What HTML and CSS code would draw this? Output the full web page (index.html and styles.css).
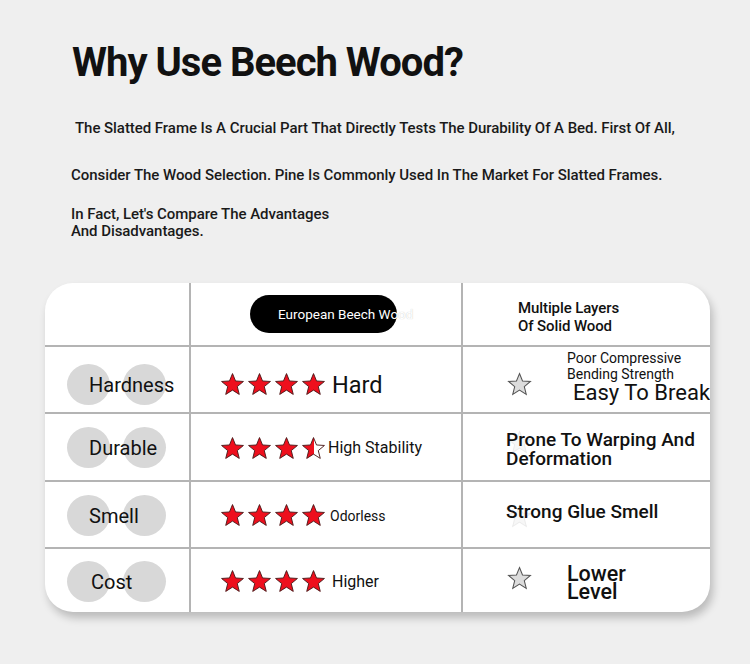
FILE: index.html
```html
<!DOCTYPE html>
<html>
<head>
<meta charset="utf-8">
<link rel="stylesheet" href="styles.css">
</head>
<body>
<svg width="0" height="0" class="defs">
  <defs>
    <symbol id="star" viewBox="0 0 24 24">
      <polygon points="12,1.5 14.9,8.6 22.5,9.1 16.6,14 18.5,21.5 12,17.4 5.5,21.5 7.4,14 1.5,9.1 9.1,8.6" />
    </symbol>
    <linearGradient id="half" x1="0" x2="1" y1="0" y2="0">
      <stop offset="0.5" stop-color="#ee0f1d"/>
      <stop offset="0.5" stop-color="#ffffff"/>
    </linearGradient>
  </defs>
</svg>
<div class="page">
  <h1 class="title">Why Use Beech Wood?</h1>
  <p class="p1">The Slatted Frame Is A Crucial Part That Directly Tests The Durability Of A Bed. First Of All,</p>
  <p class="p2">Consider The Wood Selection. Pine Is Commonly Used In The Market For Slatted Frames.</p>
  <p class="p3">In Fact, Let's Compare The Advantages<br>And Disadvantages.</p>

  <div class="card">
    <div class="cell head c1"></div>
    <div class="cell head c2"><span class="pill"><span class="pill-text">European Beech Wood</span></span></div>
    <div class="cell head c3"><div class="multi">Multiple Layers<br>Of Solid Wood</div></div>

    <div class="cell row1 c1"><div class="label"><span class="dot"></span><span class="dot"></span><span class="ltext">Hardness</span></div></div>
    <div class="cell row1 c2"><div class="stars"><svg class="s red"><use href="#star"/></svg><svg class="s red"><use href="#star"/></svg><svg class="s red"><use href="#star"/></svg><svg class="s red"><use href="#star"/></svg></div><span class="t-hard">Hard</span></div>
    <div class="cell c3 r1c3"><svg class="s gray"><use href="#star"/></svg><div class="r1txt"><div class="poor">Poor Compressive<br>Bending Strength</div><div class="break">Easy To Break</div></div></div>

    <div class="cell row c1"><div class="label"><span class="dot"></span><span class="dot"></span><span class="ltext">Durable</span></div></div>
    <div class="cell row c2"><div class="stars"><svg class="s red"><use href="#star"/></svg><svg class="s red"><use href="#star"/></svg><svg class="s red"><use href="#star"/></svg><svg class="s halfs"><use href="#star"/></svg></div><span class="t-stab">High Stability</span></div>
    <div class="cell row c3 txt3 prone"><svg class="s ghost"><use href="#star"/></svg><div class="warp">Prone To Warping And<br>Deformation</div></div>

    <div class="cell row c1"><div class="label"><span class="dot"></span><span class="dot"></span><span class="ltext">Smell</span></div></div>
    <div class="cell row c2"><div class="stars"><svg class="s red"><use href="#star"/></svg><svg class="s red"><use href="#star"/></svg><svg class="s red"><use href="#star"/></svg><svg class="s red"><use href="#star"/></svg></div><span class="t-odor">Odorless</span></div>
    <div class="cell row c3 txt3 glue"><svg class="s ghost"><use href="#star"/></svg><div class="warp">Strong Glue Smell</div></div>

    <div class="cell row c1 last"><div class="label"><span class="dot"></span><span class="dot"></span><span class="ltext cost">Cost</span></div></div>
    <div class="cell row c2 last"><div class="stars"><svg class="s red"><use href="#star"/></svg><svg class="s red"><use href="#star"/></svg><svg class="s red"><use href="#star"/></svg><svg class="s red"><use href="#star"/></svg></div><span class="t-high">Higher</span></div>
    <div class="cell row c3 last r4c3"><svg class="s gray"><use href="#star"/></svg><div class="lower">Lower<br>Level</div></div>
  </div>
</div>
</body>
</html>
```

FILE: styles.css
```css
html, body {
  margin: 0;
  padding: 0;
  background: #efefef;
}
body {
  font-family: Roboto, "Noto Sans", sans-serif;
  color: #111;
  width: 750px;
  height: 664px;
  overflow: hidden;
}
.defs { position: absolute; }
.page {
  padding: 33px 0 0 0;
}
.title {
  margin: 0 0 0 72px;
  font-size: 40px;
  font-weight: 700;
  letter-spacing: -1px;
  line-height: 60px;
  color: #111;
}
.p1, .p2, .p3 {
  font-size: 15px;
  font-weight: 500;
  letter-spacing: -0.05px;
  margin: 0;
  color: #1a1a1a;
}
.p1 { margin: 25px 0 0 75px; line-height: 20px; }
.p2 { margin: 27px 0 0 71px; line-height: 20px; }
.p3 { margin: 21px 0 0 71px; line-height: 17px; }

.card {
  margin: 43px 0 0 45px;
  width: 665px;
  height: 329px;
  background: #fff;
  border-radius: 28px;
  box-shadow: 3px 6px 8px rgba(0,0,0,0.22);
  display: grid;
  grid-template-columns: 146px 272px 247px;
  grid-template-rows: 64px 67px 68px 67px 63px;
  overflow: hidden;
}
.cell {
  border-bottom: 2px solid #b4b4b4;
  display: flex;
  align-items: center;
  box-sizing: border-box;
  position: relative;
}
.cell.last { border-bottom: none; }
.c1, .c2 { border-right: 2px solid #b4b4b4; }
.c2 { padding-left: 28px; }
.row1 { padding-top: 10px; }
.row { padding-top: 2px; }

.pill {
  margin-left: 31px;
  width: 147px;
  height: 38px;
  background: #000;
  border-radius: 19px;
  display: flex;
  align-items: center;
  box-sizing: border-box;
  padding-left: 28px;
  white-space: nowrap;
}
.pill-text {
  color: #fff;
  font-size: 13.5px;
  font-weight: 400;
  letter-spacing: 0;
  text-shadow: 0 0 1px rgba(0,0,0,0.25);
}
.multi {
  margin-left: 55px;
  margin-top: 6px;
  font-size: 15px;
  font-weight: 500;
  line-height: 18px;
  letter-spacing: -0.1px;
}

.label {
  position: relative;
  width: 100%;
  height: 42px;
  display: flex;
  align-items: center;
}
.dot {
  position: absolute;
  top: 0;
  width: 43px;
  height: 41px;
  border-radius: 50%;
  background: #d8d8d8;
}
.dot:nth-child(1) { left: 22px; }
.dot:nth-child(2) { left: 78px; }
.ltext {
  position: relative;
  margin-left: 44px;
  font-size: 20px;
  font-weight: 400;
  letter-spacing: 0;
}
.ltext.cost { margin-left: 46px; }

.stars {
  display: flex;
  gap: 2px;
  margin-left: 1px;
}
.s {
  width: 25px;
  height: 25px;
  display: block;
  flex: none;
}
.red { fill: #ee0f1d; stroke: #4a1a1a; stroke-width: 0.9; }
.halfs { fill: url(#half); stroke: #4a1a1a; stroke-width: 0.9; }
.gray { fill: #dcdcdc; stroke: #555; stroke-width: 1; }
.ghost { fill: #f7f7f7; stroke: #ececec; stroke-width: 1; position: absolute; left: 44px; }

.t-hard { font-size: 23.5px; font-weight: 400; margin-left: 6px; }
.t-stab { font-size: 16px; font-weight: 400; margin-left: 2px; margin-top: -2px; }
.t-odor { font-size: 14px; font-weight: 400; margin-left: 4px; }
.t-high { font-size: 16px; font-weight: 400; margin-left: 6px; }

.r1c3 { padding-left: 44px; white-space: nowrap; }
.r1c3 .s { margin-top: 10px; }
.r1txt { margin-left: 35px; margin-top: -5px; }
.poor { font-size: 14px; font-weight: 400; line-height: 16px; }
.break { font-size: 22px; font-weight: 400; line-height: 22px; margin-left: 6px; }

.txt3 { padding-left: 43px; }
.warp { font-size: 19px; font-weight: 500; line-height: 19px; position: relative; }
.prone .warp { margin-top: 2px; }
.prone .ghost { top: 16px; }
.glue .warp { margin-top: -9px; }
.glue .ghost { top: 22px; }

.r4c3 { padding-left: 44px; }
.r4c3 .s { margin-top: -6px; }
.lower { margin-left: 35px; font-size: 21.5px; font-weight: 500; line-height: 18px; margin-top: 2px; }
```
